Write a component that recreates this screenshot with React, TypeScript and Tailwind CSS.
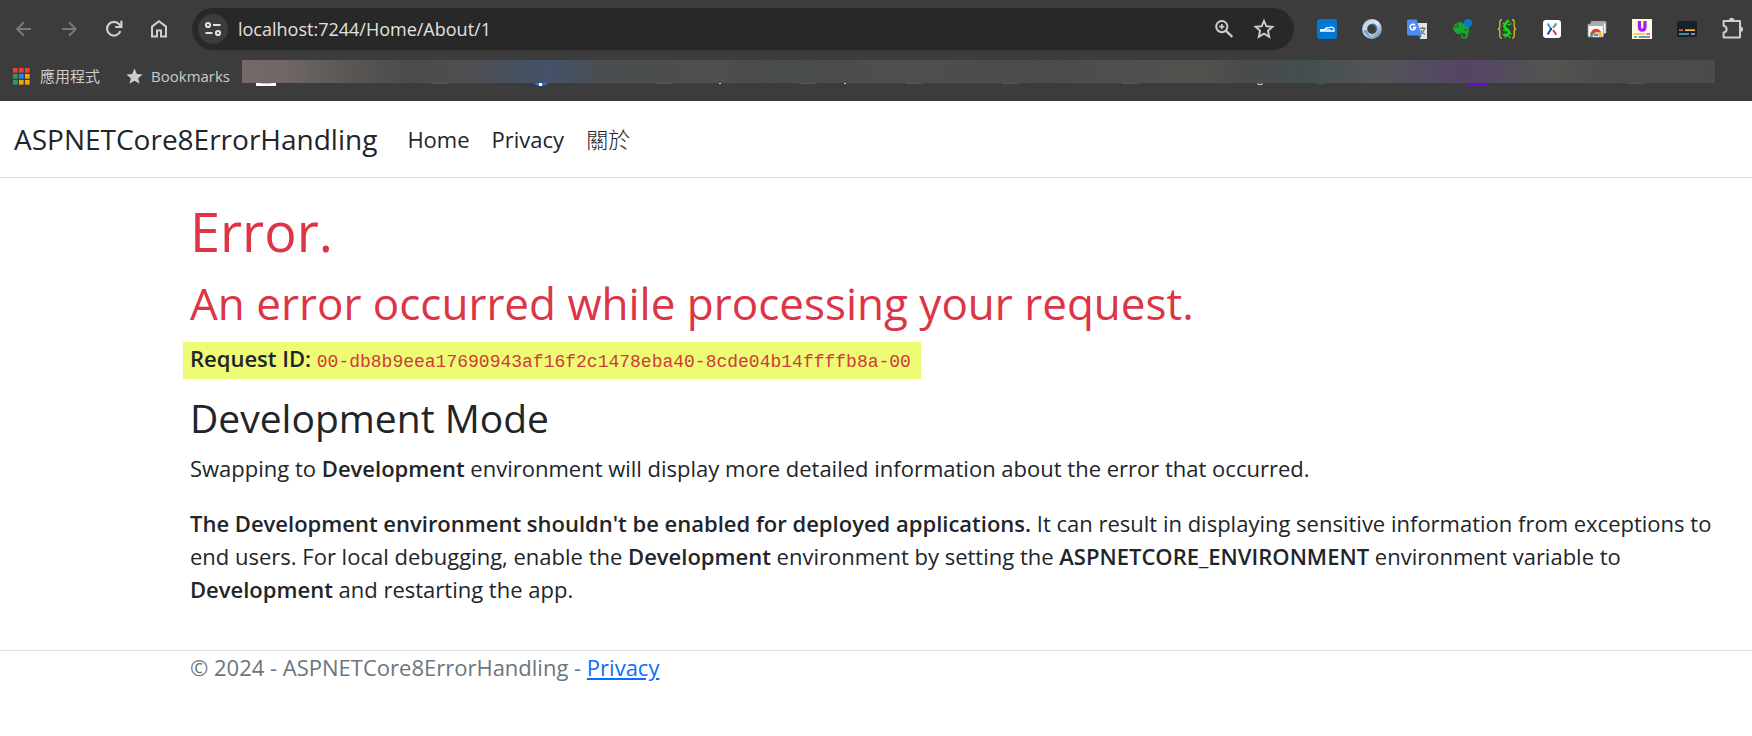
import React from "react";

const pageFont = "font-['Open_Sans','Noto_Sans_CJK_TC',sans-serif]";

function BackIcon() {
  return (
    <svg viewBox="0 0 20 20" className="size-5" fill="none" stroke="#7d7875" strokeWidth="2">
      <path d="M17 10H4M10 3.2L3.2 10L10 16.8" />
    </svg>
  );
}

function ForwardIcon() {
  return (
    <svg viewBox="0 0 20 20" className="size-5" fill="none" stroke="#7d7875" strokeWidth="2">
      <path d="M3 10h13M10 3.2L16.8 10L10 16.8" />
    </svg>
  );
}

function ReloadIcon() {
  return (
    <svg viewBox="0 0 20 20" className="size-5" fill="none" stroke="#d0cdca" strokeWidth="2.2">
      <path d="M16.4 12.2A6.9 6.9 0 1 1 15.2 5.2L17 7.2" />
      <path d="M17.4 1.8V8H11.2" />
    </svg>
  );
}

function HomeIcon() {
  return (
    <svg viewBox="0 0 20 20" className="size-5" fill="none" stroke="#d0cdca" strokeWidth="2">
      <path d="M3 17.6V7.6L10 2.2L17 7.6V17.6H12V11.4H8V17.6Z" />
    </svg>
  );
}

function TuneIcon() {
  return (
    <svg viewBox="0 0 20 20" className="size-5" fill="none" stroke="#e3e1df" strokeWidth="2">
      <circle cx="5" cy="6" r="2.1" />
      <path d="M10 6h7.5M2.5 14h7" />
      <circle cx="15" cy="14" r="2.1" />
    </svg>
  );
}

function ZoomIcon() {
  return (
    <svg viewBox="0 0 20 20" className="size-5" fill="none" stroke="#d0cdca" strokeWidth="2">
      <circle cx="7.8" cy="7.6" r="5.6" />
      <path d="M12 11.8L18.4 18" strokeWidth="2.4" />
      <path d="M7.8 5v5.2M5.2 7.6h5.2" strokeWidth="1.7" />
    </svg>
  );
}

function StarIcon() {
  return (
    <svg viewBox="0 0 20 20" className="size-5 overflow-visible" fill="none" stroke="#d0cdca" strokeWidth="1.9">
      <path d="M10 1.8L12.4 7.3L18.4 7.8L13.9 11.8L15.2 17.7L10 14.6L4.8 17.7L6.1 11.8L1.6 7.8L7.6 7.3Z" />
    </svg>
  );
}

function ShoeIcon() {
  return (
    <svg viewBox="0 0 20 20" className="size-5">
      <rect width="20" height="20" rx="3" fill="#0078d4" />
      <path d="M3 12H17V10Q16 7.6 13 8.4Q9 8.4 8 10.4L3 11" fill="none" stroke="#fff" strokeWidth="1.3" />
      <path d="M8.6 10.4H13.6" stroke="#fff" strokeWidth="0.8" />
    </svg>
  );
}

function RingIcon() {
  return (
    <svg viewBox="0 0 20 20" className="size-5" fill="none">
      <defs>
        <linearGradient id="ring" x1="0" y1="0" x2="1" y2="1">
          <stop offset="0" stopColor="#b9cfe6" />
          <stop offset="0.5" stopColor="#dfe8f0" />
          <stop offset="1" stopColor="#6890bd" />
        </linearGradient>
      </defs>
      <circle cx="10" cy="10" r="7.4" stroke="url(#ring)" strokeWidth="5" />
      <path d="M1.4 11A8.6 8.6 0 0 0 10 18.6Q6 16 6 11" fill="#7fa3cc" />
      <path d="M10 5Q15.5 5.5 14.5 12" stroke="#4d79ab" strokeWidth="1.6" />
    </svg>
  );
}

function TranslateIcon() {
  return (
    <svg viewBox="0 0 20 20" className="size-5" fill="none">
      <path d="M9 4H20V20H13Z" fill="#e1e3e6" />
      <path d="M12.6 9.4H18.6M15.6 7.8V9.4M17.6 9.6Q16.4 13.6 12.8 15M13.6 11Q15 14 18 15.4" stroke="#667079" strokeWidth="1.1" />
      <path d="M10.6 16.2H14.6L13 19.6Z" fill="#2858b8" />
      <path d="M1 0.4H9.6L14.6 16.4H1Q0 16.4 0 15.4V1.4Q0 0.4 1 0.4Z" fill="#4c8bf5" />
      <path d="M8 6.4A2.7 2.7 0 1 0 8.5 8.6H6" stroke="#fff" strokeWidth="1.5" />
    </svg>
  );
}

function ElephantIcon() {
  return (
    <svg viewBox="0 0 20 20" className="size-5" fill="none">
      <path d="M1 7.4L5.4 3V6.6Q5.4 7.4 4.6 7.4Z" fill="#14a832" />
      <path d="M0.6 8.2H5Q6.4 8.2 6.4 6.6V3Q9 2.4 10.6 4L15.4 5Q17 6 16.8 10Q16.6 19.6 13.6 19.6H10.8Q8.6 19.4 8.8 17Q9 15 11 15V16.6Q10 17 10.6 18H13Q14 17.6 13.2 14.4Q10.4 15 9.8 13.4Q9 15.4 6.6 15.2Q2 14.4 0.6 8.2Z" fill="#14a832" />
      <circle cx="13.8" cy="11" r="0.9" fill="#3c3c3c" />
      <circle cx="16" cy="4" r="4" fill="#0a78d1" />
    </svg>
  );
}

function LizardIcon() {
  return (
    <svg viewBox="0 0 20 20" className="size-5" fill="none">
      <path d="M5 0.8Q2.4 0.8 2.8 4V7.6Q2.8 10 0.8 10Q2.8 10 2.8 12.4V16Q2.4 19.2 5 19.2M15 0.8Q17.6 0.8 17.2 4V7.6Q17.2 10 19.2 10Q17.2 10 17.2 12.4V16Q17.6 19.2 15 19.2" stroke="#c9ba16" strokeWidth="1.4" />
      <path d="M11.8 1.4Q8 4 7.2 7Q7.4 9 10.6 11Q13.4 13 11 15.4Q8 17.4 6.6 14.8" stroke="#12dd1c" strokeWidth="2.6" />
      <path d="M8.4 5.6L5.6 4M10.2 6L13.4 5.4L14 3.8M9.4 12L6 11M12.4 13L14.4 15.6M9 17L8 19M11 17Q13 17.6 13.4 19" stroke="#12dd1c" strokeWidth="1.2" />
    </svg>
  );
}

function CrossIcon() {
  return (
    <svg viewBox="0 0 20 20" className="size-5" fill="none" strokeWidth="2">
      <rect x="1" y="1" width="18" height="18" rx="3" fill="#fff" />
      <path d="M5.6 4.4L9 10" stroke="#2fa3df" />
      <path d="M9 10L5.6 15.6" stroke="#2b3f97" />
      <path d="M14.4 4.4L11 9" stroke="#52a84a" />
      <path d="M8.6 10H10" stroke="#27368b" />
      <path d="M11 11L14.4 15.6" stroke="#d22e87" />
    </svg>
  );
}

function CardsIcon() {
  return (
    <svg viewBox="0 0 20 20" className="size-5">
      <rect x="4" y="2.4" width="15" height="12" rx="1" fill="#f4f4f4" stroke="#8b8f92" strokeWidth="0.8" />
      <rect x="4" y="2.4" width="15" height="2.4" fill="#a9adb0" />
      <rect x="1" y="5" width="15.4" height="13" rx="1" fill="#f8f8f8" stroke="#8b8f92" strokeWidth="0.8" />
      <rect x="1" y="5" width="15.4" height="2" fill="#a9adb0" />
      <path d="M4 13.4A5.4 5.4 0 0 1 14.2 13.4H9L6.4 17.6H3.6Z" fill="#e24434" />
      <path d="M3.8 13L7.4 17.6H3.2Q2.8 15 3.8 13Z" fill="#35a556" />
      <path d="M9 13.2H14.2Q15 15 14.6 17.6H9Z" fill="#f9bd13" />
      <path d="M6.2 17.6A2.9 2.9 0 1 1 11.8 17.6Z" fill="#4688f0" stroke="#fff" strokeWidth="0.8" />
    </svg>
  );
}

function MagnetIcon() {
  return (
    <svg viewBox="0 0 20 20" className="size-5" fill="none">
      <rect width="20" height="20" fill="#fffbe3" />
      <path d="M7.4 2V7.4Q7.4 11.2 10.2 11.2Q13 11.2 13 7.4V2" stroke="#a51cf4" strokeWidth="3.2" />
      <path d="M2 15H13" stroke="#f6b62c" strokeWidth="1.4" />
      <path d="M14.4 15H18" stroke="#ec3b32" strokeWidth="1.4" />
      <path d="M2 18H5" stroke="#139d87" strokeWidth="1.4" />
      <path d="M6.6 18H18" stroke="#2d63d5" strokeWidth="1.4" />
    </svg>
  );
}

function SubtitleIcon() {
  return (
    <svg viewBox="0 0 20 20" className="size-5" fill="none" strokeWidth="1.7">
      <rect y="2" width="20" height="16" rx="2" fill="#15202b" />
      <path d="M2 11.2H6" stroke="#e9575d" />
      <path d="M8 11.2H18" stroke="#f2c138" />
      <path d="M2 15H12" stroke="#509cc4" />
      <path d="M14 15H18" stroke="#ce8ccc" />
    </svg>
  );
}

function PuzzleIcon() {
  return (
    <svg viewBox="0 0 20 20" className="size-5 overflow-visible" fill="none">
      <path d="M2.4 2H18V18.4H1.6V13.6Q4.6 13 4.6 10.2Q4.6 7.4 1.6 6.8V2Z" stroke="#d0cdca" strokeWidth="2" strokeLinejoin="round" />
      <path d="M7 1.4A2.7 2.7 0 0 1 12.4 1.4ZM18.4 7.6A2.7 2.7 0 0 1 18.4 13Z" fill="#d0cdca" />
    </svg>
  );
}

const extensions = [
  { label: "Shoe", icon: <ShoeIcon /> },
  { label: "Ring", icon: <RingIcon /> },
  { label: "Translate", icon: <TranslateIcon /> },
  { label: "Web clipper", icon: <ElephantIcon /> },
  { label: "JSON viewer", icon: <LizardIcon /> },
  { label: "Cross", icon: <CrossIcon /> },
  { label: "Tab cards", icon: <CardsIcon /> },
  { label: "Underline", icon: <MagnetIcon /> },
  { label: "Subtitles", icon: <SubtitleIcon /> },
  { label: "Extensions", icon: <PuzzleIcon /> },
];

const appDots = ["#f23f3a", "#f23f3a", "#f23f3a", "#2f9e52", "#1a8cff", "#f5a800", "#2f9e52", "#f5a800", "#f5a800"];

const folderEdges = [190, 414, 557, 664, 760, 880, 1385];

function Toolbar() {
  return (
    <div className="flex items-center pt-2 pr-[10px] pl-[14px]">
      <div className="flex gap-[25px]">
        <button type="button" aria-label="Back"><BackIcon /></button>
        <button type="button" aria-label="Forward"><ForwardIcon /></button>
        <button type="button" aria-label="Reload"><ReloadIcon /></button>
        <button type="button" aria-label="Home"><HomeIcon /></button>
      </div>
      <div className="mr-[23px] ml-[23px] flex h-[42px] flex-1 items-center rounded-full bg-[#282828] pr-5 pl-[6px]">
        <button type="button" aria-label="Site information" className="flex size-[30px] items-center justify-center rounded-full bg-[#3c3c3c]">
          <TuneIcon />
        </button>
        <input
          type="text"
          aria-label="Address"
          defaultValue="localhost:7244/Home/About/1"
          className="ml-[10px] min-w-0 flex-1 bg-transparent text-[18px] text-[#e3e1df] outline-none"
        />
        <div className="flex gap-5">
          <button type="button" aria-label="Zoom"><ZoomIcon /></button>
          <button type="button" aria-label="Bookmark this page"><StarIcon /></button>
        </div>
      </div>
      <div className="flex gap-[25px]">
        {extensions.map((item) => (
          <button key={item.label} type="button" aria-label={item.label}>{item.icon}</button>
        ))}
      </div>
    </div>
  );
}

function BookmarksBar() {
  return (
    <div className="flex h-[51px] items-start pt-[10px] pr-[37px] pl-[13px] text-[15px] leading-8 text-[#cfccc9]">
      <a href="#apps" className="flex items-center gap-[10px]">
        <svg viewBox="0 0 17 17" className="size-[17px]">
          {appDots.map((color, i) => (
            <rect key={i} x={(i % 3) * 6} y={Math.floor(i / 3) * 6} width="4.6" height="4.6" fill={color} />
          ))}
        </svg>
        應用程式
      </a>
      <a href="#bookmarks" className="ml-[26px] flex items-center gap-2">
        <svg viewBox="0 0 17 17" className="size-[17px]" fill="#cfccc9">
          <path d="M8.5 0.6L10.8 5.9L16.6 6.4L12.2 10.2L13.5 15.8L8.5 12.8L3.5 15.8L4.8 10.2L0.4 6.4L6.2 5.9Z" />
        </svg>
        Bookmarks
      </a>
      <div className="ml-3 flex-1">
        <div className="h-[23px] bg-[linear-gradient(90deg,#746966_0%,#706764_3%,#5b5855_7%,#4d4c4b_11%,#4e4e4e_15%,#455060_19%,#44516a_21%,#4a4e54_24%,#4a4e4c_27%,#4e4e4e_31%,#494d4b_37%,#4e4e4e_45%,#4c4c4c_55%,#52514e_65%,#4b4b4b_68%,#434e51_72%,#525557_77%,#554464_83%,#554664_84%,#525252_88%,#55534f_89%,#4d4d4d_92%,#4b4b4b_100%)]" />
        <svg viewBox="0 0 1473 3" className="h-[3px] w-full" preserveAspectRatio="none">
          <rect x="14" width="20" height="3" fill="#fff" />
          <rect x="19" width="10" height="1" fill="#cdbfd3" />
          {folderEdges.map((x) => (
            <rect key={x} x={x} width="17" height="1" fill="#565656" />
          ))}
          <path d="M292 0H306Q304 3 299 3Q294 3 292 0Z" fill="#1a73e8" />
          <rect x="297" width="3" height="3" fill="#fff" />
          <rect x="477" width="2" height="1" fill="#cfccc9" />
          <rect x="602" width="2" height="1" fill="#cfccc9" />
          <path d="M1016 0V1.5H1020V0" fill="none" stroke="#cfccc9" />
          <rect x="1075" width="7" height="1" fill="#1d6d70" />
          <rect x="1225" width="20" height="3" fill="#6a0bdc" />
        </svg>
      </div>
    </div>
  );
}

export default function App() {
  return (
    <div className={`min-h-screen bg-white text-[#212529] ${pageFont}`}>
      <div className="bg-[#3c3c3c]">
        <Toolbar />
        <BookmarksBar />
      </div>

      <header className="border-b border-[#dee2e6]">
        <nav className="flex items-center px-[14px] pt-[18px] pb-[18px]">
          <a href="#home" className="text-[28px] leading-10">ASPNETCore8ErrorHandling</a>
          <ul className="ml-[30px] flex gap-[22px] text-[22px] leading-10">
            <li><a href="#home">Home</a></li>
            <li><a href="#privacy">Privacy</a></li>
            <li><a href="#about" className="font-light">關於</a></li>
          </ul>
        </nav>
      </header>

      <main className="pr-8 pl-[190px] text-[22px] leading-[33px]">
        <h1 className="pt-5 text-[54px] leading-[66px] text-[#dc3545]">Error.</h1>
        <h2 className="mt-3 text-[44px] leading-[54px] text-[#dc3545]">An error occurred while processing your request.</h2>
        <p className="mt-3 -ml-[7px] w-fit bg-[#eefb74] pr-[10px] pb-1 pl-[7px]">
          <strong className="font-semibold">Request ID:</strong>{" "}
          <code className="font-['Liberation_Mono',monospace] text-[18px] leading-none text-[#cf3a3c]">00-db8b9eea17690943af16f2c1478eba40-8cde04b14ffffb8a-00</code>
        </p>
        <h3 className="mt-4 text-[39px] leading-[46px]">Development Mode</h3>
        <p className="mt-[11px]">
          Swapping to <strong className="font-semibold">Development</strong> environment will display more detailed information about the error that occurred.
        </p>
        <p className="mt-[22px]">
          <strong className="font-semibold">The Development environment shouldn't be enabled for deployed applications.</strong> It can result in displaying sensitive information from exceptions to end users. For local debugging, enable the <strong className="font-semibold">Development</strong> environment by setting the <strong className="font-semibold">ASPNETCORE_ENVIRONMENT</strong> environment variable to <strong className="font-semibold">Development</strong> and restarting the app.
        </p>
      </main>

      <footer className="mt-11 border-t border-[#dee2e6] pl-[190px] text-[22px] leading-[33px] text-[#6c757d]">
        © 2024 - ASPNETCore8ErrorHandling - <a href="#privacy" className="text-[#0d6efd] underline">Privacy</a>
      </footer>
    </div>
  );
}
